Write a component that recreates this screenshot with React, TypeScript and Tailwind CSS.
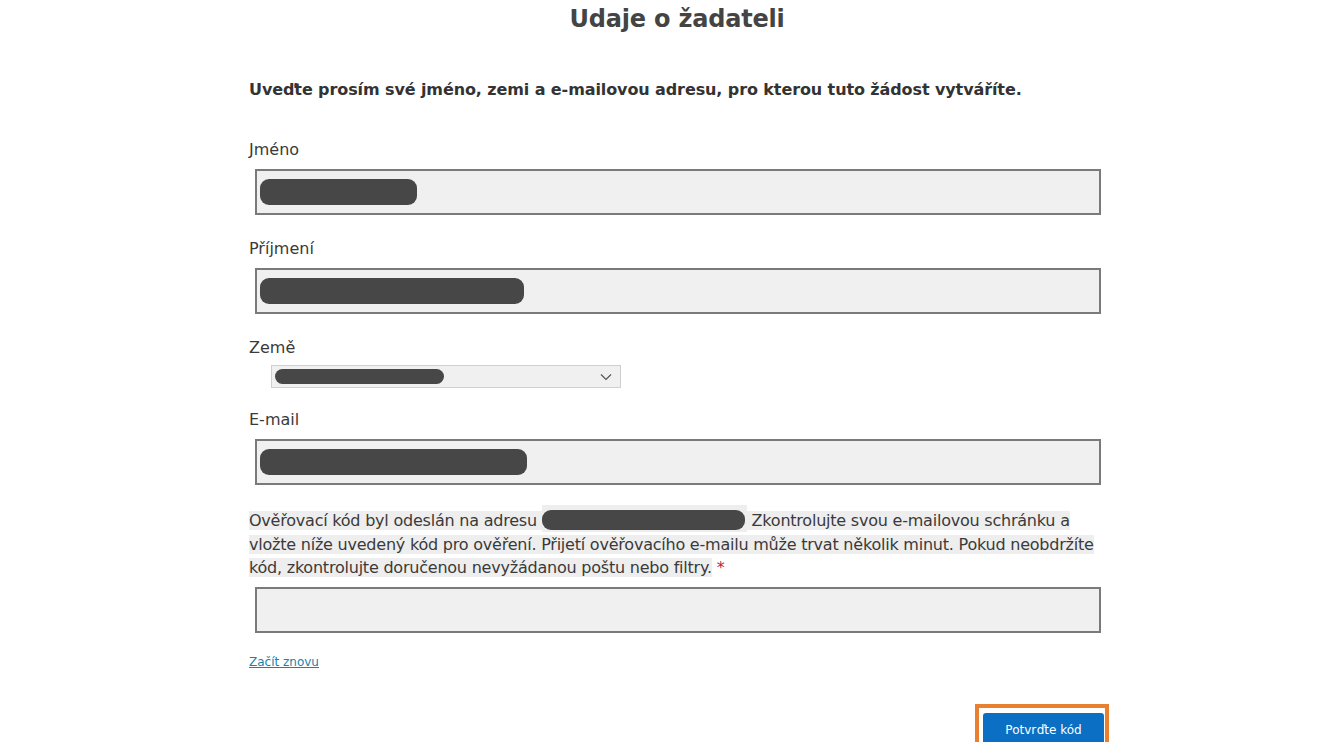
import React from "react";

const font = { fontFamily: '"DejaVu Sans", Verdana, sans-serif' };

function Redacted({ w, h = 26 }: { w: number; h?: number }) {
  return <span className="block rounded-[9px] bg-[#474747]" style={{ width: w, height: h }} />;
}

function Field({ label, blob, mt }: { label: string; blob?: number; mt: string }) {
  return (
    <div className={mt}>
      <label className="block h-6 text-[16px] leading-6 text-[#3a3a3a]">{label}</label>
      <div className="ml-[6px] mt-[7px] flex h-[46px] w-[846px] items-center border-2 border-[#7a7a7a] bg-[#f0f0f0] px-[3px]">
        {blob ? <Redacted w={blob} /> : null}
      </div>
    </div>
  );
}

export default function App() {
  return (
    <div className="min-h-[742px] w-full overflow-hidden bg-white" style={font}>
      <div className="mx-auto w-[846px]">
        <h1 className="h-[36px] pl-[10px] pt-[3px] text-center text-[24px] font-bold leading-[32px] tracking-[-0.2px] text-[#444]">
          Udaje o žadateli
        </h1>
        <p className="mt-[42px] text-[16px] font-bold leading-6 tracking-[-0.1px] text-[#333]">
          Uveďte prosím své jméno, zemi a e-mailovou adresu, pro kterou tuto žádost vytváříte.
        </p>

        <Field label="Jméno" blob={157} mt="mt-[36px]" />
        <Field label="Příjmení" blob={264} mt="mt-[22px]" />

        <div className="mt-[22px]">
          <label className="block h-6 text-[16px] leading-6 text-[#3a3a3a]">Země</label>
          <div className="ml-[22px] mt-[5px] flex h-[23px] w-[350px] items-center justify-between border border-[#cfcfcf] bg-[#f0f0f0] pl-[3px] pr-[8px]">
            <Redacted w={169} h={15} />
            <svg width="12" height="8" viewBox="0 0 12 8" fill="none" stroke="#555" strokeWidth="1.2">
              <path d="M1 1.5 6 6.5 11 1.5" />
            </svg>
          </div>
        </div>

        <Field label="E-mail" blob={267} mt="mt-[20px]" />

        <p className="mt-[20px] w-[856px] text-[16px] leading-[23.5px] tracking-[-0.22px] text-[#3a3a3a]">
          <span className="bg-[#eeeeee]">Ověřovací kód byl odeslán na adresu </span>
          <span className="inline-block h-[27px] w-[205px] bg-[#eeeeee] align-[-6px]">
            <span className="block h-[20px] w-[203px] translate-y-[5px] rounded-[9px] bg-[#474747]" />
          </span>
          <span className="bg-[#eeeeee]">
            {" "}
            Zkontrolujte svou e-mailovou schránku a vložte níže uvedený kód pro ověření. Přijetí ověřovacího e-mailu může trvat několik minut. Pokud neobdržíte kód, zkontrolujte doručenou nevyžádanou poštu nebo filtry.
          </span>{" "}
          <span className="text-[#c0282d]">*</span>
        </p>

        <div className="ml-[6px] mt-[7px] h-[46px] w-[846px] border-2 border-[#7a7a7a] bg-[#f0f0f0]" />

        <a href="#" className="mt-[21px] inline-block text-[12px] leading-4 text-[#1a82a8] underline">
          Začít znovu
        </a>

        <div className="-mr-[14px] mt-[31px] flex justify-end">
          <div className="border-[4px] border-b-0 border-[#e8802f] pl-[4px] pr-[1px] pt-[5px]">
            <button className="h-[34px] w-[121px] rounded-t-[3px] bg-[#0b6fc3] text-[12px] text-white">Potvrďte kód</button>
          </div>
        </div>
      </div>
    </div>
  );
}
